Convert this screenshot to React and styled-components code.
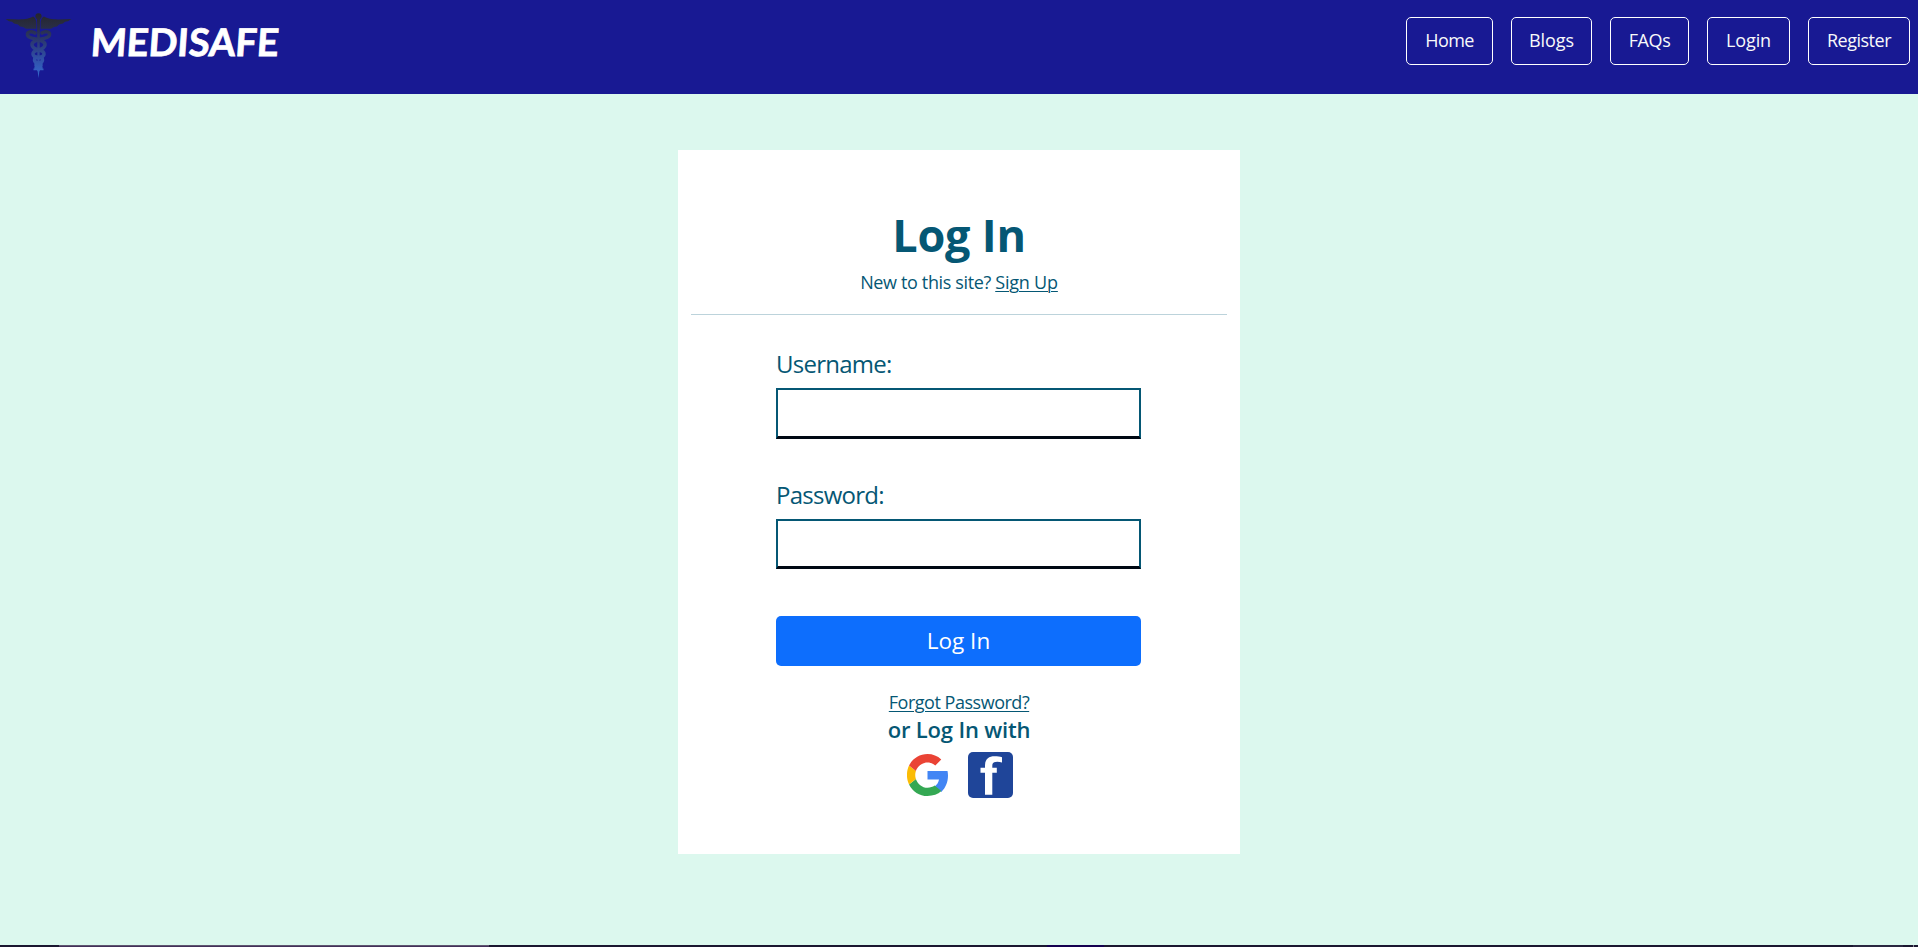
import React from 'react';
import styled, { createGlobalStyle } from 'styled-components';

const teal = '#055774';

const GlobalStyle = createGlobalStyle`
  *, *::before, *::after { box-sizing: border-box; }
  body {
    margin: 0;
    background: #dcf8ee;
    color: ${teal};
    font-family: 'Open Sans', 'Noto Sans', sans-serif;
    font-size: 18px;
    line-height: 27px;
  }
`;

const Page = styled.div`
  display: flex;
  flex-direction: column;
  height: 100vh;
  min-height: 947px;
  overflow: hidden;
`;

const Header = styled.header`
  display: flex;
  justify-content: space-between;
  align-items: flex-start;
  height: 94px;
  flex: none;
  padding-right: 8px;
  background: #181993;
`;

const Brand = styled.a`
  display: flex;
  align-items: flex-start;
  color: #fff;
  text-decoration: none;
`;

const BrandLogo = styled.svg`
  width: 80px;
  height: 94px;
`;

const BrandName = styled.span`
  margin: 16px 0 0 11px;
  font: 700 38px/50px Lato, sans-serif;
  -webkit-text-stroke: 0.8px #fff;
  transform: skewX(-4deg);
`;

const Nav = styled.nav`
  display: flex;
  gap: 18px;
  padding-top: 17px;
`;

const NavButton = styled.a`
  display: flex;
  justify-content: center;
  align-items: center;
  width: ${(p) => p.$width}px;
  height: 48px;
  padding-bottom: 2px;
  border: 1px solid #fff;
  border-radius: 5px;
  color: #f8f9fa;
  letter-spacing: ${(p) => p.$tracking}px;
  text-decoration: none;
`;

const Main = styled.main`
  flex: 1;
  display: flex;
  justify-content: center;
  align-items: flex-start;
  padding-top: 56px;
`;

const Card = styled.section`
  display: flex;
  flex-direction: column;
  align-items: center;
  width: 562px;
  height: 704px;
  padding: 58px 13px 0;
  background: #fff;
`;

const Title = styled.h1`
  margin: 0;
  font-size: 45px;
  font-weight: 700;
  line-height: 54px;
  letter-spacing: -0.2px;
`;

const Subtitle = styled.p`
  margin: 7px 0 18px;
  letter-spacing: -0.36px;
`;

const TextLink = styled.a`
  color: inherit;
  letter-spacing: ${(p) => p.$tracking}px;
  text-decoration: underline;
  text-decoration-thickness: 1px;
  text-underline-offset: 2px;
`;

const Divider = styled.hr`
  width: 100%;
  height: 1px;
  margin: 0;
  border: 0;
  background: #bcd3db;
`;

const Form = styled.form`
  display: flex;
  flex-direction: column;
  width: 365px;
  margin: 29.3px 1px 0 0;
`;

const Field = styled.label`
  display: flex;
  flex-direction: column;
  gap: 5px;
  margin-bottom: 36.3px;
`;

const FieldLabel = styled.span`
  font-size: 24px;
  line-height: 39px;
  letter-spacing: -0.75px;
`;

const Input = styled.input`
  width: 100%;
  height: 50.3px;
  padding: 0 12px;
  border: 2px solid ${teal};
  border-bottom: 3px solid #000813;
  border-radius: 0;
  outline: none;
  background: #fff;
  font: inherit;
`;

const SubmitButton = styled.button`
  height: 50px;
  margin-top: 10.5px;
  padding: 0;
  border: 0;
  border-radius: 5px;
  background: #0d6efd;
  color: #fff;
  font: 400 22.5px/32px 'Open Sans', sans-serif;
`;

const Forgot = styled.p`
  margin: 23px 0 0;
`;

const Alternative = styled.h5`
  margin: 0;
  font-size: 22px;
  font-weight: 600;
  line-height: 26px;
  letter-spacing: -0.17px;
`;

const Providers = styled.div`
  display: flex;
  align-items: center;
  gap: 20px;
  margin: 10px 0 0 2px;
`;

const ProviderIcon = styled.svg`
  display: block;
  width: ${(p) => p.$w}px;
  height: ${(p) => p.$h}px;
`;

const BottomStrip = styled.footer`
  display: flex;
  flex: none;
  height: 2px;
  background: #1b1730;
`;

const StripSegment = styled.span`
  width: ${(p) => p.$width}px;
  margin-left: ${(p) => p.$gap}px;
  background: ${(p) => p.$fill};
`;

const Caduceus = () => (
  <BrandLogo viewBox="0 0 80 94" aria-hidden="true">
    <defs>
      <linearGradient id="staff" gradientUnits="userSpaceOnUse" x1="0" y1="13" x2="0" y2="78">
        <stop offset="0" stopColor="#25252b" />
        <stop offset="0.22" stopColor="#292d45" />
        <stop offset="0.45" stopColor="#2b3a75" />
        <stop offset="0.7" stopColor="#304fa6" />
        <stop offset="1" stopColor="#356ad0" />
      </linearGradient>
    </defs>
    <g fill="url(#staff)">
      <circle cx="38.5" cy="16.3" r="3.1" />
      <path d="M37 18h3l-.5 52-1 8-1-8z" />
      <path d="M36.3 28.8H26l-3-1.8-3-.6-2-2-4-.8-2-1.800-3-.6-3.500-2.200 13.500.400c6.500 0 10.500-.7 14-2.800 1.800.3 3 3 3.300 5.500z" />
      <path d="M40.700 28.800H51l3-1.800 3-.6 2-2 4-.8 2-1.800 3-.6 3.500-2.200-13.500.400c-6.500 0-10.500-.7-14-2.800-1.800.3-3 3-3.300 5.500z" />
      <path d="M33.500 68.500h10v1.800h-3.500l-1.500 2-1.500-2h-3.500z" />
    </g>
    <g fill="none" stroke="url(#staff)" strokeLinecap="round" strokeWidth="3.500">
      <path d="M35 33c-3.500-2.500-8-1-7.500 1.800C28 40 46 38 45 45S32.500 48 33 54 43 55 42.500 60 35.500 61 36 65 40 66.500 41 68" />
      <path d="M42 33c3.500-2.500 8-1 7.500 1.800C49 40 31 38 32 45S44.500 48 44 54 34 55 34.500 60 41.500 61 41 65 37 66.500 36 68" />
    </g>
  </BrandLogo>
);

const GoogleIcon = () => (
  <ProviderIcon $w={41} $h={42} viewBox="3 3 42 42" preserveAspectRatio="none" aria-label="Google">
    <path fill="#4285f4" d="M44.500 20H24v8.500h11.800c-.5 2.900-2.100 5.300-4.500 6.900l6.900 5.500C42.300 37 45 31.300 45 24.500c0-1.600-.2-3.100-.5-4.500z" />
    <path fill="#34a853" d="M24 45c5.700 0 10.600-1.600 14.200-4.900l-6.900-5.500c-1.900 1.300-4.400 2.100-7.300 2.100-5.500 0-10.200-3.700-11.900-8.800l-7 5.500C8.600 40.400 15.700 45 24 45z" />
    <path fill="#fbbc05" d="M12.100 27.900c-.9-2.600-.9-5.300 0-7.900l-7-5.400c-2.900 5.800-2.900 13 0 18.800z" />
    <path fill="#ea4335" d="M24 11.400c3 0 5.800 1.100 8 3.100l6.100-6C34.300 4.900 29.400 3 24 3 15.700 3 8.600 7.600 5.100 14.600l7 5.400c1.700-5 6.400-8.600 11.900-8.600z" />
  </ProviderIcon>
);

const FacebookIcon = () => (
  <ProviderIcon $w={45} $h={46} viewBox="0 0 45 46" aria-label="Facebook">
    <rect width="45" height="46" rx="5" fill="#1f4599" />
    <path
      fill="#fff"
      d="M17 42.700V20.700h-4.500v-5H17V13.500C17 7.500 20.500 4.300 26.500 4.300c3 0 5.500.2 7.500.9v5.300c-1.500-.5-3-.8-4.800-.8-3.300 0-4.900 1.200-4.900 4v2h4.500v5h-4.500v22z"
    />
  </ProviderIcon>
);

const links = [
  { label: 'Home', width: 87, tracking: -0.6 },
  { label: 'Blogs', width: 81, tracking: -0.1 },
  { label: 'FAQs', width: 79, tracking: -0.4 },
  { label: 'Login', width: 83, tracking: -0.1 },
  { label: 'Register', width: 102, tracking: -0.5 },
];

export default function App() {
  return (
    <Page>
      <GlobalStyle />
      <Header>
        <Brand href="#">
          <Caduceus />
          <BrandName>MEDISAFE</BrandName>
        </Brand>
        <Nav>
          {links.map((link) => (
            <NavButton key={link.label} href="#" $width={link.width} $tracking={link.tracking}>
              {link.label}
            </NavButton>
          ))}
        </Nav>
      </Header>
      <Main>
        <Card>
          <Title>Log In</Title>
          <Subtitle>
            New to this site? <TextLink href="#" $tracking={-0.2}>Sign Up</TextLink>
          </Subtitle>
          <Divider />
          <Form onSubmit={(e) => e.preventDefault()}>
            <Field>
              <FieldLabel>Username:</FieldLabel>
              <Input type="text" name="username" />
            </Field>
            <Field>
              <FieldLabel>Password:</FieldLabel>
              <Input type="password" name="password" />
            </Field>
            <SubmitButton type="submit">Log In</SubmitButton>
          </Form>
          <Forgot>
            <TextLink href="#" $tracking={-0.48}>Forgot Password?</TextLink>
          </Forgot>
          <Alternative>or Log In with</Alternative>
          <Providers>
            <GoogleIcon />
            <FacebookIcon />
          </Providers>
        </Card>
      </Main>
      <BottomStrip>
        <StripSegment $gap={59} $width={430} $fill="linear-gradient(#5f5670 50%, #43305a 50%)" />
        <StripSegment $gap={558} $width={57} $fill="#150050" />
        <StripSegment $gap={749} $width={50} $fill="#2a2740" />
        <StripSegment $gap={10} $width={1} $fill="#8a8896" />
      </BottomStrip>
    </Page>
  );
}
